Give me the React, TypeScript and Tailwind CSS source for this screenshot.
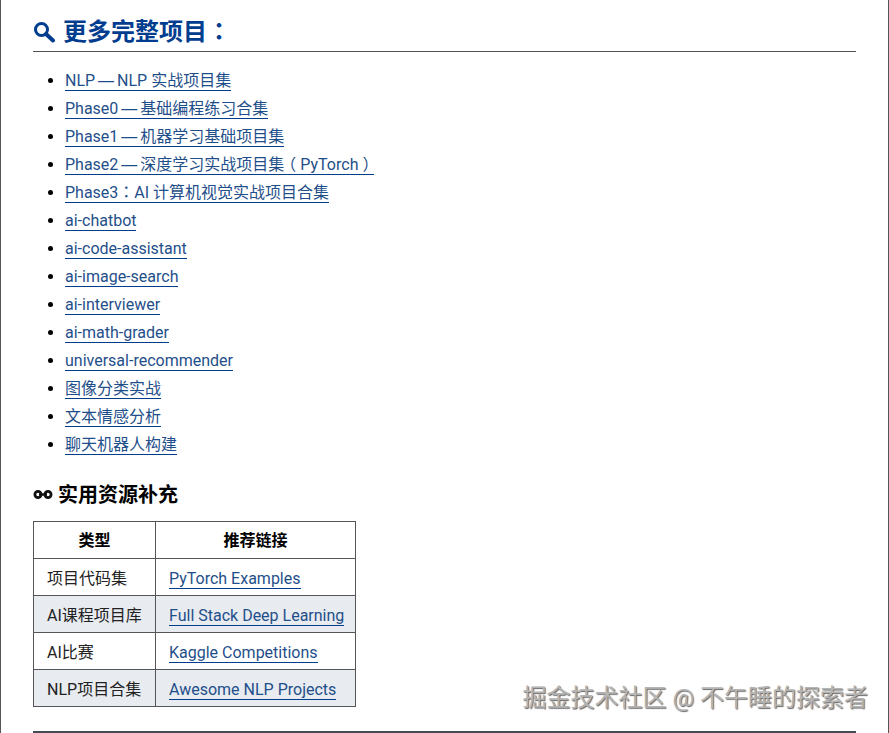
import React from 'react';

const font = 'font-["Roboto","Noto_Sans_CJK_SC",sans-serif]';

// centred full-width punctuation, kept out of the line box height
const tc = 'font-["Noto_Sans_CJK_TC",sans-serif] leading-[0] [text-spacing-trim:space-all]';
const paren = "inline-block w-4 text-center leading-[0] [font-feature-settings:'halt']";
const dash = <span className='-mx-px font-["Liberation_Sans",sans-serif] leading-[0]'>—</span>;

const projects: React.ReactNode[] = [
  <>NLP {dash} NLP 实战项目集</>,
  <>Phase0 {dash} 基础编程练习合集</>,
  <>Phase1 {dash} 机器学习基础项目集</>,
  <>Phase2 {dash} 深度学习实战项目集<span className={paren}>（</span>PyTorch<span className={paren}>）</span></>,
  <>Phase3<span className={tc}>：</span>AI 计算机视觉实战项目合集</>,
  'ai-chatbot',
  'ai-code-assistant',
  'ai-image-search',
  'ai-interviewer',
  'ai-math-grader',
  'universal-recommender',
  '图像分类实战',
  '文本情感分析',
  '聊天机器人构建',
];

const resources = [
  ['项目代码集', 'PyTorch Examples'],
  ['AI课程项目库', 'Full Stack Deep Learning'],
  ['AI比赛', 'Kaggle Competitions'],
  ['NLP项目合集', 'Awesome NLP Projects'],
];

const SearchIcon = () => (
  <svg viewBox="0 0 22 22" className="w-[22px] h-[22px] shrink-0" fill="none" stroke="#003d8f">
    <circle cx="8.5" cy="8.5" r="6" strokeWidth="3" />
    <path d="M13 13l7 6.5" strokeWidth="4" strokeLinecap="round" />
  </svg>
);

const LinkIcon = () => (
  <svg viewBox="0 0 20 9" className="mb-[2px] w-5 h-[9px] shrink-0" fill="none" stroke="#111">
    <circle cx="5" cy="4.5" r="3.1" strokeWidth="2.8" />
    <circle cx="15" cy="4.5" r="3.1" strokeWidth="2.8" />
    <path d="M6 4.5h8" strokeWidth="2.4" />
  </svg>
);

export default function App() {
  return (
    <div className={`relative h-[733px] w-[889px] overflow-hidden border-x border-[#555] bg-white px-8 text-black ${font}`}>
      {/* Heading */}
      <h2 className="flex h-[52px] items-center gap-2 border-b border-[#555] pt-[12px] text-[24px] leading-[38px] font-bold text-[#003d8f]">
        <SearchIcon />
        <span>更多完整项目<span className={tc}>：</span></span>
      </h2>

      {/* Project links */}
      <ul className="mt-[15px] list-disc pl-8 text-[16px] leading-[28px]">
        {projects.map((p, i) => (
          <li key={i}>
            <a className="border-b border-[#003d8f] text-[#1f4f8a]">{p}</a>
          </li>
        ))}
      </ul>

      <h3 className="mt-[18px] flex h-[36px] items-center gap-[5px] text-[20px] font-bold">
        <LinkIcon />
        <span>实用资源补充</span>
      </h3>

      {/* Resource table */}
      <table className="mt-[8px] w-[323px] table-fixed border-collapse text-[16px] text-[#222]">
        <thead>
          <tr className="h-[37px] text-black">
            <th className="w-[122px] border border-[#555] pt-[2px] font-bold">类型</th>
            <th className="border border-[#555] pt-[2px] font-bold">推荐链接</th>
          </tr>
        </thead>
        <tbody>
          {resources.map(([type, link], i) => (
            <tr key={type} className={`h-[37px] ${i % 2 === 1 ? 'bg-[#e8ebf0]' : ''}`}>
              <td className="border border-[#555] px-[13px] pt-[3px] whitespace-nowrap">{type}</td>
              <td className="border border-[#555] px-[13px] pt-[3px] whitespace-nowrap">
                <a className="border-b border-[#003d8f] text-[#1f4f8a]">{link}</a>
              </td>
            </tr>
          ))}
        </tbody>
      </table>

      <div className="mt-[24px] h-[2px] bg-[#444b52]" />

      {/* Watermark */}
      <div className="absolute top-[683px] right-[20px] text-[24px] leading-[30px] whitespace-nowrap text-[#b4b4b4] [text-shadow:1px_1px_1px_#666,-1px_-1px_0_#fff]">
        掘金技术社区 @ 不午睡的探索者
      </div>
    </div>
  );
}
